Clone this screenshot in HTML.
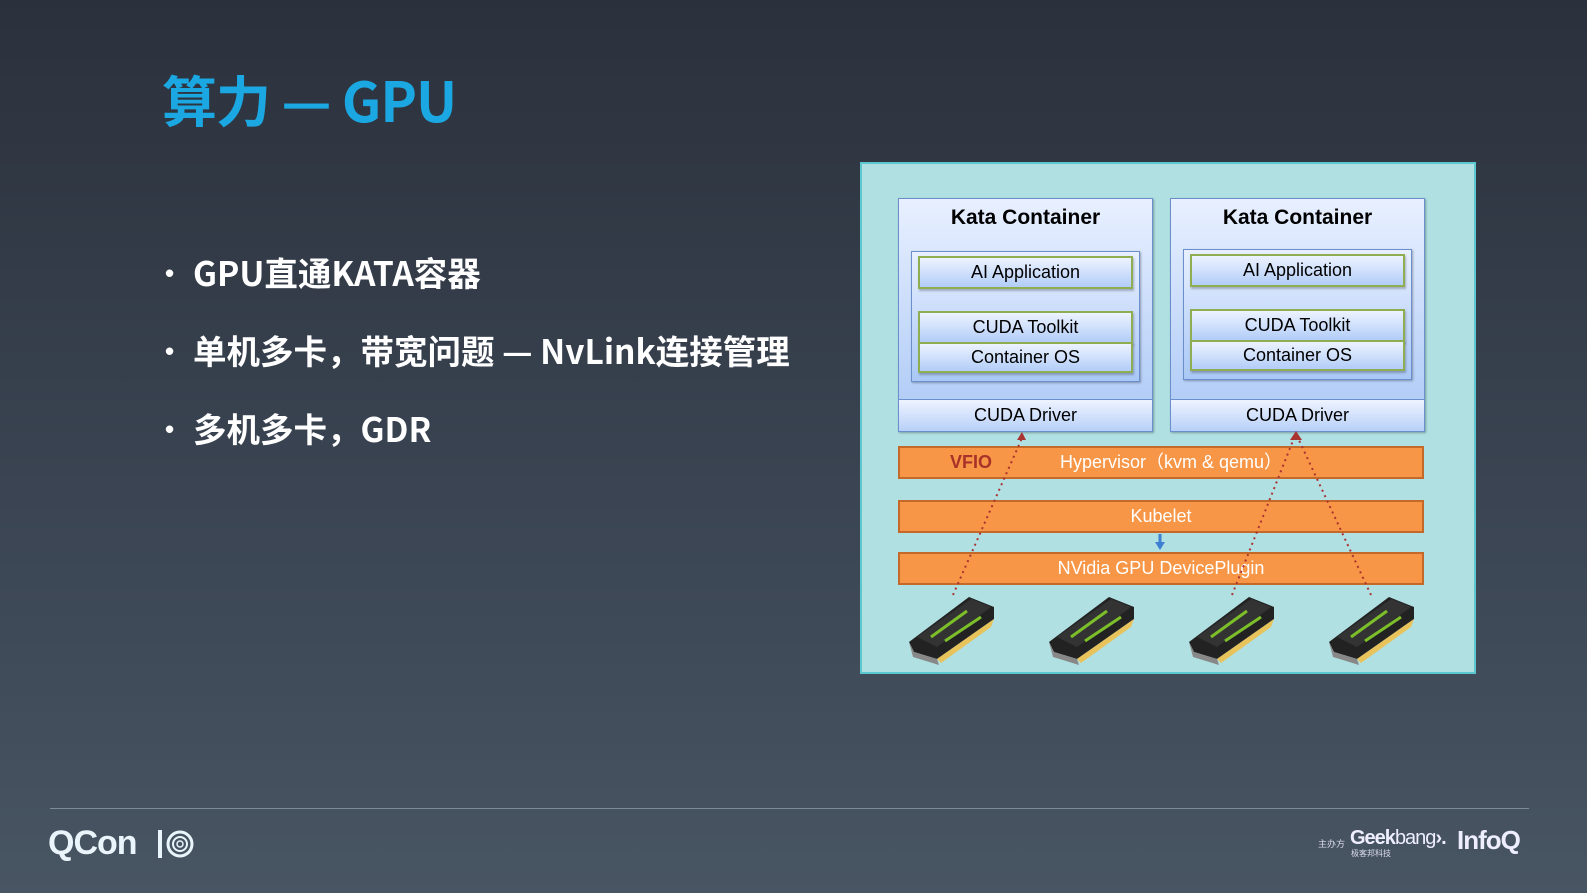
<!DOCTYPE html>
<html><head><meta charset="utf-8"><style>
*{margin:0;padding:0;box-sizing:border-box}
body{width:1587px;height:893px;overflow:hidden;background:linear-gradient(#2b313c 0%,#3a4452 55%,#485563 100%);font-family:"Liberation Sans","Noto Sans CJK SC",sans-serif;position:relative}
.a{position:absolute}
.t{left:162px;top:58px;font-size:55px;font-weight:bold;color:#1ba8e2;font-family:"Noto Sans CJK SC",sans-serif;letter-spacing:-1px;white-space:nowrap}
.b{left:193px;font-size:33.5px;font-weight:bold;color:#fff;font-family:"Noto Sans CJK SC",sans-serif;white-space:nowrap}
.d{left:165px;font-size:26px;color:#fff;font-weight:bold}
.panel{left:860px;top:162px;width:616px;height:512px;background:#b0e0e2;border:2px solid #5bc8cf}
.kc{background:linear-gradient(#e8f0ff,#aac8f6);border:1px solid #6b8fcc;box-shadow:1px 1px 2px rgba(0,0,0,.3)}
.box{background:linear-gradient(#edf3ff,#b2cdf8);border:2px solid #8fae52;text-align:center;font-size:18px;color:#000;box-shadow:1px 2px 2px rgba(0,0,0,.25)}
.drv{background:linear-gradient(#eef3ff,#b7d0f8);border:1px solid #6b8fcc;text-align:center;font-size:18px;line-height:30px}
.bar{left:898px;width:526px;height:33px;background:#f79646;border:2px solid #c5692b;color:#fff;text-align:center;font-size:18px;line-height:29px}
.kt{font-weight:bold;font-size:21px;text-align:center}
</style></head><body>
<div class="a t">算力 — GPU</div>
<div class="a d" style="top:258px">•</div><div class="a b" style="top:247px">GPU直通KATA容器</div>
<div class="a d" style="top:336px">•</div><div class="a b" style="top:325px">单机多卡，带宽问题 — NvLink连接管理</div>
<div class="a d" style="top:414px">•</div><div class="a b" style="top:403px">多机多卡，GDR</div>

<div class="a panel"></div>
<div class="a kc" style="left:898px;top:198px;width:255px;height:234px"></div>
<div class="a kt" style="left:898px;top:206px;width:255px">Kata Container</div>
<div class="a kc" style="left:911px;top:251px;width:229px;height:131px"></div>
<div class="a box" style="left:918px;top:256px;width:215px;height:33px;line-height:29px">AI Application</div>
<div class="a box" style="left:918px;top:311px;width:215px;height:33px;line-height:29px">CUDA Toolkit</div>
<div class="a box" style="left:918px;top:342px;width:215px;height:31px;line-height:27px">Container OS</div>
<div class="a drv" style="left:898px;top:399px;width:255px;height:33px">CUDA Driver</div>
<div class="a kc" style="left:1170px;top:198px;width:255px;height:234px"></div>
<div class="a kt" style="left:1170px;top:206px;width:255px">Kata Container</div>
<div class="a kc" style="left:1183px;top:249px;width:229px;height:131px"></div>
<div class="a box" style="left:1190px;top:254px;width:215px;height:33px;line-height:29px">AI Application</div>
<div class="a box" style="left:1190px;top:309px;width:215px;height:33px;line-height:29px">CUDA Toolkit</div>
<div class="a box" style="left:1190px;top:340px;width:215px;height:31px;line-height:27px">Container OS</div>
<div class="a drv" style="left:1170px;top:399px;width:255px;height:33px">CUDA Driver</div>

<div class="a bar" style="top:446px"><span style="position:absolute;left:50px;color:#a8322a;font-weight:bold">VFIO</span>&nbsp;&nbsp;&nbsp;&nbsp;Hypervisor（kvm &amp; qemu）</div>
<div class="a bar" style="top:500px">Kubelet</div>
<div class="a bar" style="top:552px">NVidia GPU DevicePlugin</div>

<svg class="a" style="left:0;top:0" width="1587" height="893">
<g stroke="#a33" stroke-width="2" stroke-dasharray="2,4" fill="none">
<line x1="953" y1="595" x2="1022" y2="438"/>
<line x1="1232" y1="595" x2="1294" y2="438"/>
<line x1="1371" y1="595" x2="1298" y2="438"/>
</g>
<polygon points="1017,440 1026,440 1022,432" fill="#a33"/>
<polygon points="1290,440 1302,440 1296,431" fill="#a33"/>
<line x1="1160" y1="534" x2="1160" y2="544" stroke="#3d7fd0" stroke-width="3"/>
<polygon points="1155,542 1165,542 1160,550" fill="#3d7fd0"/>
<defs><g id="g">
<polygon points="0,45 60,0 85,10 85,22 28,62 5,55" fill="#222"/>
<polygon points="8,40 62,2 82,10 28,50" fill="#333"/>
<line x1="22" y1="40" x2="58" y2="14" stroke="#7cbf2a" stroke-width="3"/>
<line x1="36" y1="44" x2="72" y2="20" stroke="#7cbf2a" stroke-width="3"/>
<polygon points="28,62 85,22 82,30 32,66" fill="#e8c25a"/>
<polygon points="0,45 5,55 28,62 30,68 4,60" fill="#888"/>
</g></defs>
<use href="#g" x="909" y="597"/>
<use href="#g" x="1049" y="597"/>
<use href="#g" x="1189" y="597"/>
<use href="#g" x="1329" y="597"/>
</svg>

<div class="a" style="left:50px;top:808px;width:1479px;height:1px;background:#7d8b98"></div>
<div class="a" style="left:48px;top:824px;font-size:34px;font-weight:bold;color:#eaf4fb;letter-spacing:-1px">QCon</div>
<svg class="a" style="left:156px;top:828px" width="44" height="32"><rect x="2" y="2" width="4" height="28" fill="#eaf4fb"/><circle cx="24" cy="16" r="12" fill="none" stroke="#eaf4fb" stroke-width="3"/><circle cx="24" cy="16" r="7" fill="none" stroke="#eaf4fb" stroke-width="2"/><circle cx="24" cy="16" r="3" fill="none" stroke="#eaf4fb" stroke-width="1.5"/></svg>
<div class="a" style="left:1318px;top:837px;font-size:9px;color:#dde;font-family:'Noto Sans CJK SC',sans-serif">主办方</div>
<div class="a" style="left:1350px;top:827px;font-size:20px;font-weight:bold;color:#eef;letter-spacing:-1px">Geek<span style="font-weight:normal">bang</span>›.</div>
<div class="a" style="left:1351px;top:848px;font-size:8px;color:#dde;font-family:'Noto Sans CJK SC',sans-serif">极客邦科技</div>
<div class="a" style="left:1457px;top:825px;font-size:26px;font-weight:bold;color:#eef;letter-spacing:-1px">InfoQ</div>
</body></html>
